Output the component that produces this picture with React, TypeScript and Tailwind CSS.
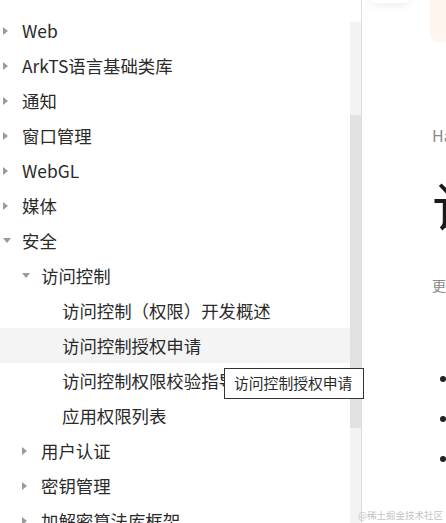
import React from "react";

type Item = { label: string; level: 0 | 1 | 2; arrow?: "right" | "down"; active?: boolean };

const items: Item[] = [
  { label: "Web", level: 0, arrow: "right" },
  { label: "ArkTS语言基础类库", level: 0, arrow: "right" },
  { label: "通知", level: 0, arrow: "right" },
  { label: "窗口管理", level: 0, arrow: "right" },
  { label: "WebGL", level: 0, arrow: "right" },
  { label: "媒体", level: 0, arrow: "right" },
  { label: "安全", level: 0, arrow: "down" },
  { label: "访问控制", level: 1, arrow: "down" },
  { label: "访问控制（权限）开发概述", level: 2 },
  { label: "访问控制授权申请", level: 2, active: true },
  { label: "访问控制权限校验指导", level: 2 },
  { label: "应用权限列表", level: 2 },
  { label: "用户认证", level: 1, arrow: "right" },
  { label: "密钥管理", level: 1, arrow: "right" },
  { label: "加解密算法库框架", level: 1, arrow: "right" },
];

function Arrow({ dir }: { dir: "right" | "down" }) {
  if (dir === "right")
    return (
      <span className="block w-0 h-0 border-y-[4px] border-y-transparent border-l-[5px] border-l-[#9a9a9a]" />
    );
  return (
    <span className="block w-0 h-0 border-x-[4px] border-x-transparent border-t-[5px] border-t-[#9a9a9a]" />
  );
}

export default function App() {
  return (
    <div
      className="relative w-[446px] h-[523px] overflow-hidden bg-white flex text-[#2a2a2a]"
      style={{ fontFamily: '"Noto Sans CJK SC", "Noto Sans", sans-serif' }}
    >
      {/* Sidebar */}
      <div className="w-[350px] shrink-0 pt-[13px]">
        {items.map((it, i) => {
          const pad = it.level === 0 ? "pl-[3px]" : it.level === 1 ? "pl-[22px]" : "pl-[62px]";
          return (
            <div
              key={i}
              className={`h-[35px] flex items-center ${pad} ${it.active ? "bg-[#f4f4f4]" : ""}`}
            >
              {it.arrow && (
                <span className="w-[19px] flex items-center">
                  <Arrow dir={it.arrow} />
                </span>
              )}
              <span className="text-[17.4px] leading-none whitespace-nowrap">{it.label}</span>
            </div>
          );
        })}
      </div>
      {/* Scrollbar */}
      <div className="w-[11px] shrink-0 flex flex-col">
        <div className="h-[22px] bg-white" />
        <div className="h-[93px] bg-[#f3f3f3]" />
        <div className="h-[313px] bg-[#e2e2e2]" />
        <div className="flex-1 bg-[#f3f3f3]" />
      </div>
      <div className="w-px shrink-0 bg-[#dcdcdc]" />
      {/* Main */}
      <div className="relative flex-1 pl-[70px] overflow-hidden">
        <div className="absolute left-[8px] top-[-8px] w-[40px] h-[11px] bg-white rounded-md shadow-[0_2px_10px_rgba(0,0,0,0.08)]" />
        <div className="absolute left-[68px] top-0 w-[30px] h-[42px] bg-[#fff7ef] rounded-bl-lg" />
        <div className="pt-[125px] text-[16px] leading-[20px] text-[#8a8a8a] whitespace-nowrap">HarmonyOS</div>
        <div className="mt-[26px] text-[54px] leading-[70px] text-[#1a1a1a] whitespace-nowrap">访问控制授权申请</div>
        <div className="mt-[34px] text-[14px] leading-[20px] text-[#8a8a8a] whitespace-nowrap">更新时间</div>
        <ul className="mt-[81px] flex flex-col gap-[34px] pl-[8px]">
          {[0, 1, 2].map((k) => (
            <li key={k} className="flex items-center h-[6px]">
              <span className="w-[6px] h-[6px] rounded-full bg-[#222]" />
            </li>
          ))}
        </ul>
      </div>
      {/* Tooltip */}
      <div className="absolute left-[224px] top-[368px] w-[140px] h-[31px] bg-white border border-[#333] flex items-center pl-[9px] text-[14.8px] text-[#2a2a2a] whitespace-nowrap">
        访问控制授权申请
      </div>
      {/* Watermark */}
      <div className="absolute left-[358px] top-[509px] text-[9.5px] leading-[12px] text-[#c4c4c4] whitespace-nowrap">
        @稀土掘金技术社区
      </div>
    </div>
  );
}
